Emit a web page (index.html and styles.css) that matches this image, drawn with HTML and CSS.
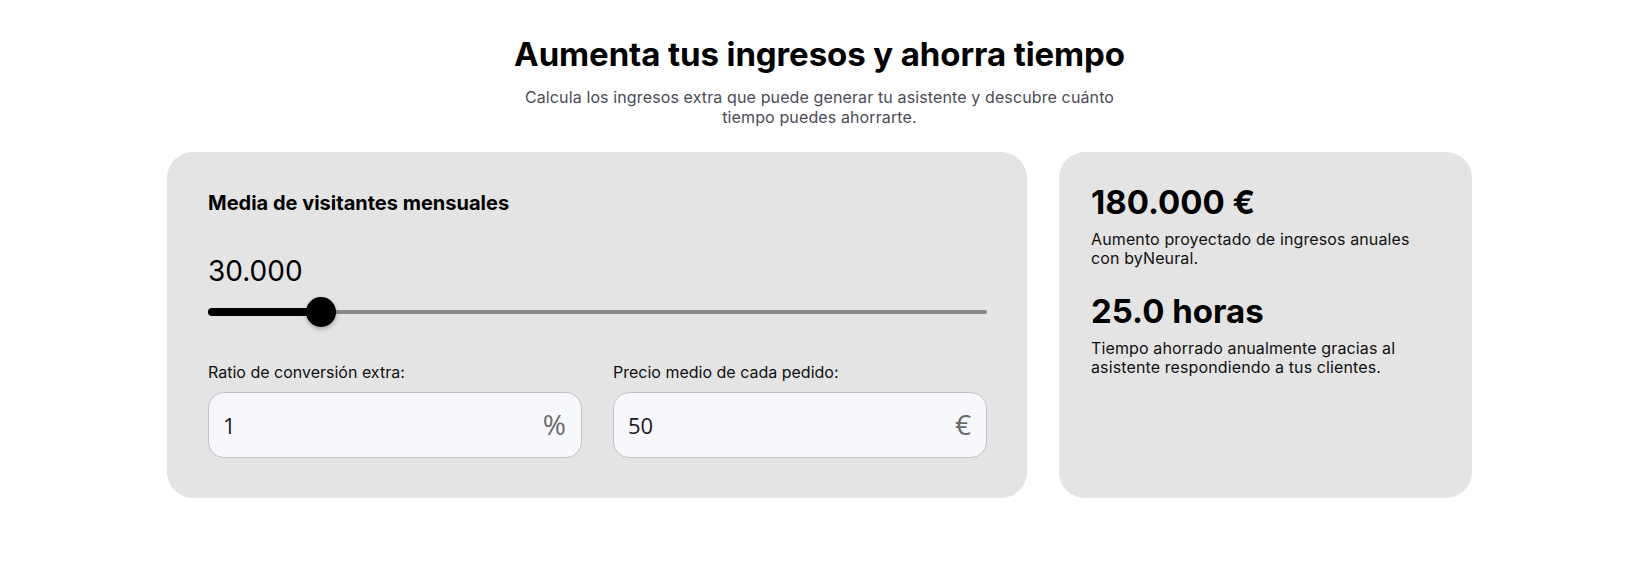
FILE: index.html
```html
<!DOCTYPE html>
<html lang="es">
<head>
<meta charset="utf-8">
<title>Calculadora de ingresos</title>
<link rel="stylesheet" href="styles.css">
</head>
<body>
<main class="page">
  <header class="intro">
    <h1 class="title">Aumenta tus ingresos y ahorra tiempo</h1>
    <p class="subtitle">Calcula los ingresos extra que puede generar tu asistente y descubre cuánto tiempo puedes ahorrarte.</p>
  </header>
  <section class="cards">
    <div class="card card-inputs">
      <div class="field-title">Media de visitantes mensuales</div>
      <div class="visitors">30.000</div>
      <div class="slider">
        <div class="slider-rail"></div>
        <div class="slider-fill" style="width: 113px"></div>
        <div class="slider-knob" style="left: 98px"></div>
      </div>
      <div class="inputs">
        <label class="field">
          <span class="field-label">Ratio de conversión extra:</span>
          <span class="input-box">
            <input class="input" type="text" value="1">
            <span class="suffix">%</span>
          </span>
        </label>
        <label class="field">
          <span class="field-label">Precio medio de cada pedido:</span>
          <span class="input-box">
            <input class="input" type="text" value="50">
            <span class="suffix">€</span>
          </span>
        </label>
      </div>
    </div>
    <div class="card card-results">
      <div class="result">
        <div class="result-value">180.000 €</div>
        <p class="result-text">Aumento proyectado de ingresos anuales con byNeural.</p>
      </div>
      <div class="result">
        <div class="result-value">25.0 horas</div>
        <p class="result-text">Tiempo ahorrado anualmente gracias al asistente respondiendo a tus clientes.</p>
      </div>
    </div>
  </section>
</main>
</body>
</html>
```

FILE: styles.css
```css
* { box-sizing: border-box; }

html, body {
  margin: 0;
  padding: 0;
  background: #ffffff;
}

body {
  font-family: Inter, "Noto Sans", Arial, sans-serif;
  color: #000;
  line-height: 1.15;
}

.page {
  width: 1639px;
  padding-top: 36px;
}

.intro {
  text-align: center;
}

.title {
  margin: 0;
  font-size: 33px;
  font-weight: 700;
  line-height: 1.15;
  letter-spacing: -0.1px;
}

.subtitle {
  margin: 13px auto 0;
  max-width: 600px;
  font-size: 16px;
  line-height: 20px;
  letter-spacing: 0.12px;
  color: #4b4b57;
}

.cards {
  display: flex;
  justify-content: center;
  gap: 32px;
  margin-top: 25px;
}

.card {
  background: #e4e4e4;
  border-radius: 26px;
}

.card-inputs {
  width: 860px;
  padding: 40px 40px 40px 41px;
}

.card-results {
  width: 413px;
  padding: 32px 32px;
}

.field-title {
  font-size: 20px;
  font-weight: 700;
  line-height: 1.15;
}

.visitors {
  margin-top: 40px;
  font-size: 28px;
  font-weight: 400;
  line-height: 1.15;
}

.slider {
  position: relative;
  margin-top: 10px;
  height: 30px;
}

.slider-rail {
  position: absolute;
  left: 0;
  right: 0;
  top: 13px;
  height: 4px;
  border-radius: 2px;
  background: #8a8a8a;
}

.slider-fill {
  position: absolute;
  left: 0;
  top: 11px;
  height: 8px;
  border-radius: 4px;
  background: #000;
}

.slider-knob {
  position: absolute;
  top: 0;
  width: 30px;
  height: 30px;
  border-radius: 50%;
  background: #000;
  box-shadow: 0 2px 4px rgba(0, 0, 0, 0.3);
}

.inputs {
  display: grid;
  grid-template-columns: 1fr 1fr;
  gap: 31px;
  margin-top: 36px;
}

.field {
  display: flex;
  flex-direction: column;
  gap: 10px;
}

.field-label {
  font-size: 16px;
  line-height: 1.15;
  color: #111;
}

.input-box {
  display: flex;
  align-items: center;
  height: 66px;
  padding: 0 15px 0 14px;
  background: #f7f8fc;
  border: 1px solid #c3c3c8;
  border-radius: 16px;
}

.input {
  flex: 1;
  min-width: 0;
  border: 0;
  outline: 0;
  background: transparent;
  padding: 0;
  font-family: "Open Sans", "Noto Sans", sans-serif;
  font-size: 22px;
  color: #1a1a1a;
}

.suffix {
  font-family: "Open Sans", "Noto Sans", sans-serif;
  font-size: 28px;
  color: #6a6a6a;
}

.result + .result {
  margin-top: 25px;
}

.result-value {
  font-size: 33px;
  font-weight: 700;
  line-height: 1.15;
}

.result-text {
  margin: 8px 0 0;
  max-width: 335px;
  font-size: 16px;
  line-height: 19px;
  letter-spacing: 0.12px;
  color: #111;
}
```
